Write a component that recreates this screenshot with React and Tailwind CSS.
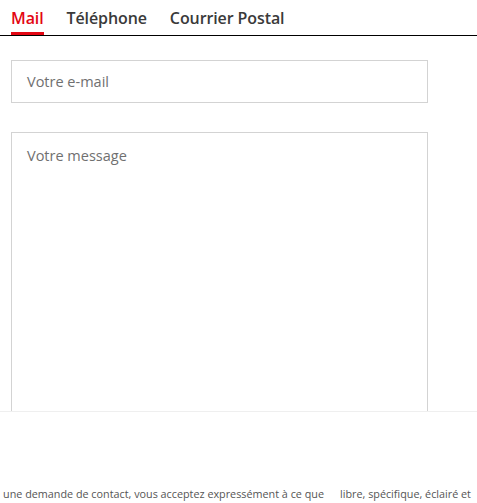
import React from "react";

const tabs = ["Mail", "Téléphone", "Courrier Postal"];

const App = () => {
  return (
    <div className="w-[477px] h-[503px] overflow-hidden bg-white" style={{ fontFamily: "'Open Sans', sans-serif" }}>
      <div className="h-[411px] overflow-hidden">
        <div className="flex gap-[23px] pl-[11px] border-b border-black h-[36px]">
          {tabs.map((t, i) => (
            <div
              key={t}
              className={`pt-[7px] text-[16px] font-semibold leading-[23px] tracking-[-0.1px] ${
                i === 0 ? "text-[#e30613] border-b-[3px] border-[#e30613] h-[35px]" : "text-[#3a3a3a]"
              }`}
            >
              {t}
            </div>
          ))}
        </div>
        <div className="pl-[11px] pt-[24px] w-[428px]">
          <div className="h-[43px] border border-[#d3d3d3] flex items-center px-[15px] text-[14.5px] text-[#707070]">
            Votre e-mail
          </div>
          <div className="mt-[29px] h-[400px] border border-[#d3d3d3] px-[15px] pt-[12px] text-[14.5px] text-[#707070]">
            Votre message
          </div>
        </div>
      </div>
      <div className="border-t border-[#efefef] pt-[74px] flex text-[10.8px] text-[#555] whitespace-nowrap">
        <div className="w-[324px] flex justify-end">
          <span>une demande de contact, vous acceptez expressément à ce que</span>
        </div>
        <div className="ml-[16px]">libre, spécifique, éclairé et</div>
      </div>
    </div>
  );
};

export default App;
